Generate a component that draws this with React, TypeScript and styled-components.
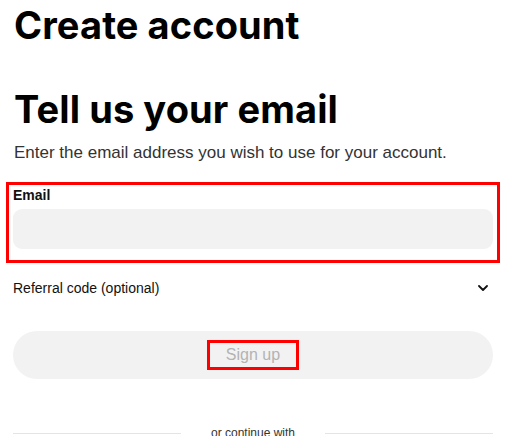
import React from "react";
import styled, { createGlobalStyle } from "styled-components";

const GlobalStyle = createGlobalStyle`
  html, body { margin: 0; padding: 0; background: #ffffff; }
  body { font-family: "Liberation Sans", Arial, sans-serif; color: #111; }
  * { box-sizing: border-box; }
`;

const Page = styled.main`
  width: 480px;
  margin-left: 13px;
  padding-top: 2px;
  display: flex;
  flex-direction: column;
`;

const Title = styled.h1`
  margin: 0;
  font-family: "Inter", "Liberation Sans", sans-serif;
  font-weight: 700;
  font-size: 38px;
  line-height: 46px;
  letter-spacing: 0.1px;
  color: #000;
  padding-left: 1px;
`;

const StepTitle = styled(Title).attrs({ as: "h2" })`
  margin-top: 38px;
`;

const Subtitle = styled.p`
  margin: 9px 0 0;
  font-size: 17px;
  line-height: 24px;
  color: #333;
  padding-left: 1px;
`;

const FieldGroup = styled.div`
  margin: 20px -4px 0;
  padding: 0 4px 11px;
  outline: 3px solid #ff0000;
  display: flex;
  flex-direction: column;
  gap: 4px;
`;

const Label = styled.label`
  font-size: 14px;
  line-height: 20px;
  font-weight: 700;
  color: #111;
`;

const Input = styled.input`
  height: 40px;
  width: 100%;
  border: none;
  border-radius: 9px;
  background: #f2f2f2;
  padding: 0 12px;
  font: inherit;
  outline: none;
`;

const ReferralRow = styled.div`
  margin-top: 4px;
  height: 48px;
  display: flex;
  align-items: center;
  justify-content: space-between;
  padding-right: 5px;
  font-size: 14px;
  color: #111;
`;

const SubmitButton = styled.button`
  margin-top: 19px;
  height: 48px;
  width: 100%;
  border: none;
  border-radius: 24px;
  background: #f2f2f2;
  display: flex;
  align-items: center;
  justify-content: center;
  font-family: "Liberation Sans", Arial, sans-serif;
  padding: 0;
`;

const ButtonLabel = styled.span`
  outline: 3px solid #ff0000;
  padding: 0 16px;
  line-height: 24px;
  font-size: 16px;
  color: #b3b3b3;
`;

const Divider = styled.div`
  margin-top: 44px;
  display: flex;
  align-items: center;
  gap: 30px;
`;

const Rule = styled.span`
  flex: 1;
  height: 1px;
  background: #e4e4e7;
`;

const DividerText = styled.span`
  font-size: 12px;
  line-height: 20px;
  color: #333;
`;

const Chevron = () => (
  <svg width="10" height="6" viewBox="0 0 10 6" fill="none">
    <polyline points="1,1 5,5 9,1" stroke="#111" strokeWidth="1.8" strokeLinecap="round" strokeLinejoin="round" />
  </svg>
);

export default function App() {
  return (
    <>
      <GlobalStyle />
      <Page>
        <Title>Create account</Title>
        <StepTitle>Tell us your email</StepTitle>
        <Subtitle>Enter the email address you wish to use for your account.</Subtitle>
        <FieldGroup>
          <Label htmlFor="email">Email</Label>
          <Input id="email" type="email" />
        </FieldGroup>
        <ReferralRow>
          <span>Referral code (optional)</span>
          <Chevron />
        </ReferralRow>
        <SubmitButton type="button" disabled>
          <ButtonLabel>Sign up</ButtonLabel>
        </SubmitButton>
        <Divider>
          <Rule />
          <DividerText>or continue with</DividerText>
          <Rule />
        </Divider>
      </Page>
    </>
  );
}
